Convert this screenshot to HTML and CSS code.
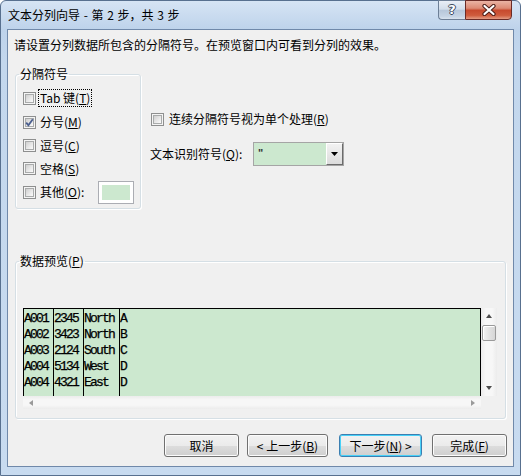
FILE: index.html
```html
<!DOCTYPE html>
<html lang="zh-CN">
<head>
<meta charset="utf-8">
<title>文本分列向导</title>
<link rel="stylesheet" href="styles.css">
</head>
<body>
<div class="window">
  <div class="titlebar">
    <span class="title">文本分列向导 - 第 2 步，共 3 步</span>
    <div class="caption">
      <div class="cap-btn help"><span class="q">?</span></div>
      <div class="cap-btn close">
        <svg width="14" height="12" viewBox="0 0 14 12">
          <path d="M2.5 2 L11.5 10 M11.5 2 L2.5 10" stroke="#4a1c16" stroke-width="4.2" stroke-linecap="round"/>
          <path d="M2.5 2 L11.5 10 M11.5 2 L2.5 10" stroke="#ffffff" stroke-width="2.2" stroke-linecap="round"/>
        </svg>
      </div>
    </div>
  </div>
  <div class="client">
    <p class="instr">请设置分列数据所包含的分隔符号。在预览窗口内可看到分列的效果。</p>
    <div class="top">
      <fieldset class="group sep">
        <legend>分隔符号</legend>
        <div class="chk-row r1"><span class="chk"><span class="chk-in"></span></span><span class="lbl focus">Tab 键(<u>T</u>)</span></div>
        <div class="chk-row r2"><span class="chk"><span class="chk-in"><svg class="tick" width="9" height="9" viewBox="0 0 9 9"><path d="M1.2 4.6 L3.4 7.2 L7.8 1.2" fill="none" stroke="#4b5f8f" stroke-width="1.8"/></svg></span></span><span class="lbl">分号(<u>M</u>)</span></div>
        <div class="chk-row r3"><span class="chk"><span class="chk-in"></span></span><span class="lbl">逗号(<u>C</u>)</span></div>
        <div class="chk-row r4"><span class="chk"><span class="chk-in"></span></span><span class="lbl">空格(<u>S</u>)</span></div>
        <div class="chk-row r5"><span class="chk"><span class="chk-in"></span></span><span class="lbl">其他(<u>O</u>):</span><span class="other-box"><span class="other-fill"></span></span></div>
      </fieldset>
      <div class="options">
        <div class="opt-row consec"><span class="chk"><span class="chk-in"></span></span><span class="opt-lbl">连续分隔符号视为单个处理(<u>R</u>)</span></div>
        <div class="opt-row qual">
          <span class="qual-lbl">文本识别符号(<u>Q</u>):</span>
          <div class="combo">
            <span class="combo-val">"</span>
            <span class="combo-btn"><svg width="7" height="4" viewBox="0 0 7 4"><path d="M0 0 H7 L3.5 4 Z" fill="#000"/></svg></span>
          </div>
        </div>
      </div>
    </div>
    <fieldset class="group preview">
      <legend>数据预览(<u>P</u>)</legend>
      <div class="grid">
        <div class="data">
          <div class="col c1"><div>A001</div><div>A002</div><div>A003</div><div>A004</div><div>A004</div></div>
          <div class="col c2"><div>2345</div><div>3423</div><div>2124</div><div>5134</div><div>4321</div></div>
          <div class="col c3"><div>North</div><div>North</div><div>South</div><div>West</div><div>East</div></div>
          <div class="col c4"><div>A</div><div>B</div><div>C</div><div>D</div><div>D</div></div>
        </div>
        <div class="vscroll">
          <span class="arr up"></span>
          <span class="thumb"></span>
          <span class="arr down"></span>
        </div>
      </div>
      <div class="hrow">
        <div class="hscroll"><span class="arr left"></span><span class="arr right"></span></div>
        <div class="corner"></div>
      </div>
    </fieldset>
    <div class="buttons">
      <button class="btn b-cancel">取消</button>
      <button class="btn b-back">&lt; 上一步(<u>B</u>)</button>
      <button class="btn b-next">下一步(<u>N</u>) &gt;</button>
      <button class="btn b-finish">完成(<u>F</u>)</button>
    </div>
  </div>
</div>
</body>
</html>
```

FILE: styles.css
```css
* { box-sizing: border-box; }
html, body { margin: 0; padding: 0; }
body {
  width: 521px;
  height: 476px;
  overflow: hidden;
  background: #ffffff;
  font-family: "Noto Sans CJK SC", "Noto Sans", sans-serif;
  font-size: 12px;
  color: #000;
}
u { text-decoration: underline; text-underline-offset: 1px; }

.window {
  width: 521px;
  height: 476px;
  display: flex;
  flex-direction: column;
  border: 1px solid #58708f;
  border-radius: 6px 6px 0 0;
  background: linear-gradient(to bottom, #d6e4f4 0, #bed3eb 28px, #c3d7ed 60px, #c8dbf0 100%);
  padding: 0 6px 8px 6px;
}

.titlebar {
  height: 28px;
  display: flex;
  justify-content: space-between;
  align-items: flex-start;
}
.title {
  margin-top: 6px;
  margin-left: 1px;
  line-height: 16px;
  font-size: 12px;
  color: #000;
  word-spacing: 1px;
}
.caption {
  display: flex;
  margin-top: -1px;
  margin-right: 2px;
}
.cap-btn {
  height: 20px;
  display: flex;
  align-items: center;
  justify-content: center;
}
.help {
  width: 27px;
  border: 1px solid #6d7f96;
  border-right: none;
  border-radius: 0 0 0 4px;
  background: linear-gradient(to bottom, #e9eff7 0, #d3deeb 45%, #b7c7da 52%, #c6d4e4 85%, #d9e3ef 100%);
}
.help .q {
  font-family: "DejaVu Sans", sans-serif;
  font-weight: bold;
  font-size: 13px;
  line-height: 14px;
  color: #fff;
  text-shadow: 1px 0 0 #3b4a5e, -1px 0 0 #3b4a5e, 0 1px 0 #3b4a5e, 0 -1px 0 #3b4a5e;
}
.close {
  width: 47px;
  border: 1px solid #6a2b26;
  border-radius: 0 0 4px 0;
  background: linear-gradient(to bottom, #eab3a4 0, #dc8a74 40%, #c74a2e 52%, #cf5c3d 80%, #e39c84 100%);
}

.client {
  flex: 1;
  background: #f0f0f0;
  border: 1px solid #7089aa;
  display: flex;
  flex-direction: column;
}

.instr {
  margin: 7px 0 0 6px;
  line-height: 16px;
}

.top {
  display: flex;
  align-items: flex-start;
  margin-top: 13px;
}

.group {
  margin: 0 0 0 7px;
  border: 1px solid #d5dfe5;
  border-radius: 3px;
  box-shadow: inset 1px 1px 0 #ffffff, 1px 1px 0 #ffffff;
  min-width: 0;
}
.group legend {
  padding: 0 1px;
  margin-left: -4px;
  line-height: 16px;
}

.sep {
  width: 126px;
  padding: 4px 6px 4px 7px;
}
.chk-row {
  display: flex;
  align-items: center;
  height: 24px;
}
.chk-row.r3, .chk-row.r4 { height: 23px; }

.chk {
  width: 13px;
  height: 13px;
  flex: none;
  border: 1px solid #8e8f8f;
  background: #f4f4f4;
  padding: 1px;
  display: flex;
}
.chk-in {
  flex: 1;
  border: 1px solid #a9abab;
  background: linear-gradient(135deg, #cfcfcf 0, #e8e8e8 55%, #fbfbfb 100%);
  display: flex;
  align-items: center;
  justify-content: center;
}
.tick { margin: -1px; }

.lbl {
  margin-left: 2px;
  padding: 0 1px;
  border: 1px solid transparent;
  line-height: 16px;
  white-space: nowrap;
}
.lbl.focus { border: 1px dotted #000; }

.other-box {
  margin-left: auto;
  width: 36px;
  height: 23px;
  border: 1px solid #abadb3;
  background: #ffffff;
  padding: 3px;
  display: flex;
}
.other-fill { flex: 1; background: #cce8cf; }

.options {
  margin-left: 10px;
  display: flex;
  flex-direction: column;
}
.opt-row { display: flex; align-items: center; }
.consec {
  margin-top: 45px;
  height: 16px;
}
.opt-lbl {
  margin-left: 5px;
  line-height: 16px;
  white-space: nowrap;
}
.qual {
  margin-top: 15px;
  margin-left: -1px;
}
.qual-lbl {
  width: 103px;
  line-height: 16px;
  white-space: nowrap;
}
.combo {
  width: 91px;
  height: 24px;
  border: 1px solid #a5a5a5;
  background: #cce8cf;
  display: flex;
  align-items: stretch;
}
.combo-val {
  flex: 1;
  padding-left: 4px;
  line-height: 16px;
  font-family: "Liberation Sans", sans-serif;
  font-size: 11px;
  font-weight: bold;
  color: #333;
  padding-top: 2px;
}
.combo-btn {
  width: 17px;
  border-left: 1px solid #ffffff;
  border-top: 1px solid #ffffff;
  border-right: 1px solid #6b6b6b;
  border-bottom: 1px solid #6b6b6b;
  background: linear-gradient(to bottom, #f2f2f2, #dcdcdc);
  display: flex;
  align-items: center;
  justify-content: center;
}

.preview {
  width: 491px;
  margin-top: 44px;
  padding: 39px 8px 9px 7px;
}

.grid { display: flex; }
.data {
  width: 458px;
  height: 88px;
  border-top: 1px solid #000;
  border-right: 1px solid #000;
  background: #cce8cf;
  display: flex;
  font-family: "Liberation Mono", monospace;
  font-size: 13px;
  letter-spacing: -1.8px;
  -webkit-text-stroke: 0.25px #000;
  color: #000;
}
.col {
  border-left: 1px solid #000;
  padding-top: 2px;
  line-height: 16px;
  white-space: pre;
}
.c1 { width: 30px; }
.c2 { width: 30px; }
.c3 { width: 36px; }
.c4 { flex: 1; }

.vscroll {
  width: 16px;
  height: 88px;
  background: linear-gradient(to right, #ececec, #f7f7f7 30%, #f7f7f7 70%, #ececec);
  display: flex;
  flex-direction: column;
  align-items: center;
}
.arr { width: 0; height: 0; border-style: solid; }
.arr.up {
  margin-top: 6px;
  border-width: 0 3.5px 4px 3.5px;
  border-color: transparent transparent #4d4d4d transparent;
}
.thumb {
  margin-top: 7px;
  width: 14px;
  height: 16px;
  border: 1px solid #9a9a9a;
  border-radius: 2px;
  background: linear-gradient(to right, #f4f4f4, #e3e3e3 50%, #d6d6d6);
  box-shadow: inset 1px 1px 0 #fff;
}
.arr.down {
  margin-top: auto;
  margin-bottom: 6px;
  border-width: 4px 3.5px 0 3.5px;
  border-color: #4d4d4d transparent transparent transparent;
}

.hrow { display: flex; }
.hscroll {
  width: 458px;
  height: 13px;
  background: linear-gradient(to bottom, #ececec, #f7f7f7 30%, #f7f7f7 70%, #ececec);
  display: flex;
  align-items: center;
  justify-content: space-between;
  padding: 0 6px;
}
.arr.left {
  border-width: 3.5px 4px 3.5px 0;
  border-color: transparent #9a9a9a transparent transparent;
}
.arr.right {
  border-width: 3.5px 0 3.5px 4px;
  border-color: transparent transparent transparent #9a9a9a;
}
.corner { width: 16px; height: 13px; }

.buttons {
  display: flex;
  justify-content: flex-end;
  margin-top: 15px;
  margin-right: 6px;
}
.btn {
  height: 23px;
  padding: 0;
  font-family: "Noto Sans CJK SC", "Noto Sans", sans-serif;
  font-size: 12px;
  line-height: 16px;
  color: #000;
  border: 1px solid #707070;
  border-radius: 3px;
  background: linear-gradient(to bottom, #f2f2f2 0, #ebebeb 50%, #dddddd 51%, #cfcfcf 100%);
  box-shadow: inset 0 0 0 1px #fcfcfc;
}
.b-cancel { width: 75px; }
.b-back { width: 81px; margin-left: 8px; }
.b-next {
  width: 83px;
  margin-left: 11px;
  border-color: #3c7fb1;
  box-shadow: inset 0 0 0 1px #48d1f8;
}
.b-finish { width: 75px; margin-left: 10px; }
```
